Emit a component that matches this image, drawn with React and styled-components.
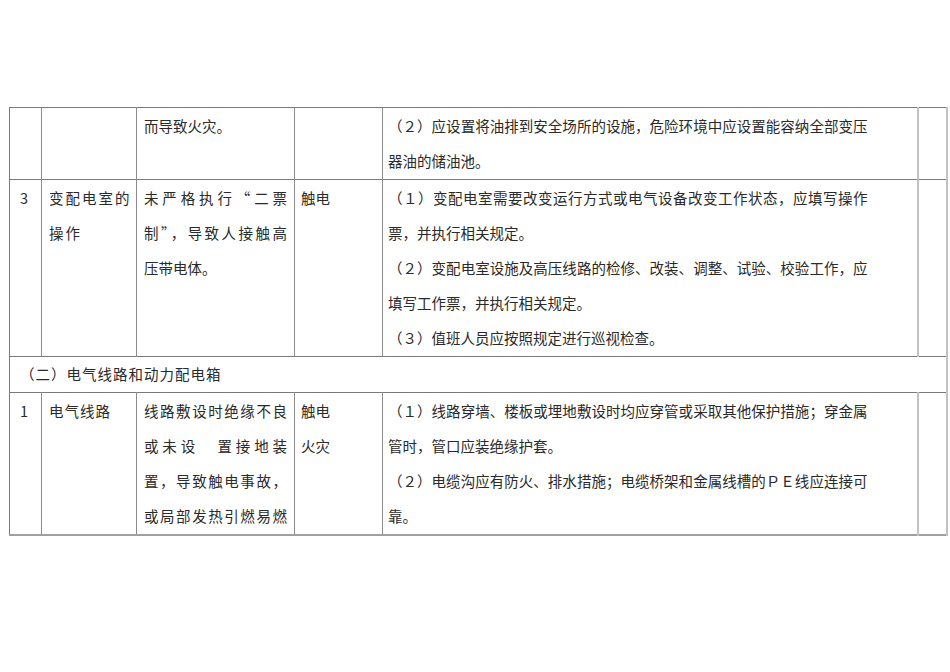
import React from 'react';
import styled, { createGlobalStyle } from 'styled-components';

const GlobalStyle = createGlobalStyle`
  html, body {
    margin: 0;
    padding: 0;
    background: #ffffff;
  }
  body {
    font-family: "Noto Sans CJK SC", "Noto Sans", sans-serif;
    color: #2a2a2a;
  }
`;

const Page = styled.div`
  width: 950px;
  height: 672px;
  padding: 107px 0 0 9px;
  box-sizing: border-box;
  overflow: hidden;
`;

const Table = styled.table`
  border-collapse: collapse;
  table-layout: fixed;
  width: 937px;
  font-size: 14.5px;
  line-height: 35px;
  border-top: 1px solid #7a7a7a;
  border-left: 1px solid #7a7a7a;
  border-bottom: 2px solid #a0a0a0;
`;

const Row = styled.tr`
  border-top: 1px solid #7a7a7a;
`;

const Cell = styled.td`
  vertical-align: top;
  padding: 0 ${p => p.$pr || 6}px 1px ${p => p.$pl || 6}px;
  border-right: ${p => (p.$light ? '2px solid #c2c2c2' : '1px solid #8c8c8c')};
  white-space: nowrap;
  overflow: hidden;
`;

const SectionCell = styled.td`
  padding: 0 0 1px 10px;
  line-height: 34px;
  letter-spacing: 1px;
  border-right: 2px solid #c2c2c2;
`;

const Line = styled.div`
  text-align: ${p => (p.$spread ? 'justify' : 'left')};
  text-align-last: ${p => (p.$spread ? 'justify' : 'left')};
  letter-spacing: ${p => p.$ls || 0}px;
`;

const rows = [
  {
    no: '',
    item: [],
    cause: ['而导致火灾。'],
    risk: [],
    measures: [
      '（２）应设置将油排到安全场所的设施，危险环境中应设置能容纳全部变压',
      '器油的储油池。',
    ],
    measureSpread: [0],
  },
  {
    no: '3',
    item: ['变配电室的', '操作'],
    itemSpread: [0],
    itemLs: 2,
    cause: ['未严格执行“二票', '制”，导致人接触高', '压带电体。'],
    causeSpread: [0, 1],
    risk: ['触电'],
    measures: [
      '（１）变配电室需要改变运行方式或电气设备改变工作状态，应填写操作',
      '票，并执行相关规定。',
      '（２）变配电室设施及高压线路的检修、改装、调整、试验、校验工作，应',
      '填写工作票，并执行相关规定。',
      '（３）值班人员应按照规定进行巡视检查。',
    ],
    measureSpread: [0, 2],
  },
  { section: '（二）电气线路和动力配电箱' },
  {
    no: '1',
    item: ['电气线路'],
    itemLs: 1,
    cause: ['线路敷设时绝缘不良', '或未设　置接地装', '置，导致触电事故，', '或局部发热引燃易燃'],
    causeSpread: [0, 1, 2, 3],
    risk: ['触电', '火灾'],
    measures: [
      '（１）线路穿墙、楼板或埋地敷设时均应穿管或采取其他保护措施；穿金属',
      '管时，管口应装绝缘护套。',
      '（２）电缆沟应有防火、排水措施；电缆桥架和金属线槽的ＰＥ线应连接可',
      '靠。',
    ],
    measureSpread: [0, 2],
  },
];

const Lines = ({ lines, spread = [], ls }) =>
  lines.map((t, i) => (
    <Line key={i} $spread={spread.includes(i)} $ls={ls}>
      {t}
    </Line>
  ));

const App = () => (
  <>
    <GlobalStyle />
    <Page>
      <Table>
        <colgroup>
          <col style={{ width: 32 }} />
          <col style={{ width: 95 }} />
          <col style={{ width: 158 }} />
          <col style={{ width: 88 }} />
          <col style={{ width: 535 }} />
          <col style={{ width: 29 }} />
        </colgroup>
        <tbody>
          {rows.map((r, i) =>
            r.section ? (
              <Row key={i}>
                <SectionCell colSpan={6}>{r.section}</SectionCell>
              </Row>
            ) : (
              <Row key={i}>
                <Cell $pl={10}>{r.no}</Cell>
                <Cell $pl={7} $pr={7}>
                  <Lines lines={r.item} spread={r.itemSpread} ls={r.itemLs} />
                </Cell>
                <Cell $pl={7} $pr={7}>
                  <Lines lines={r.cause} spread={r.causeSpread} />
                </Cell>
                <Cell>
                  <Lines lines={r.risk} />
                </Cell>
                <Cell $pl={5} $pr={49} $light>
                  <Lines lines={r.measures} spread={r.measureSpread} />
                </Cell>
                <Cell $light />
              </Row>
            )
          )}
        </tbody>
      </Table>
    </Page>
  </>
);

export default App;
